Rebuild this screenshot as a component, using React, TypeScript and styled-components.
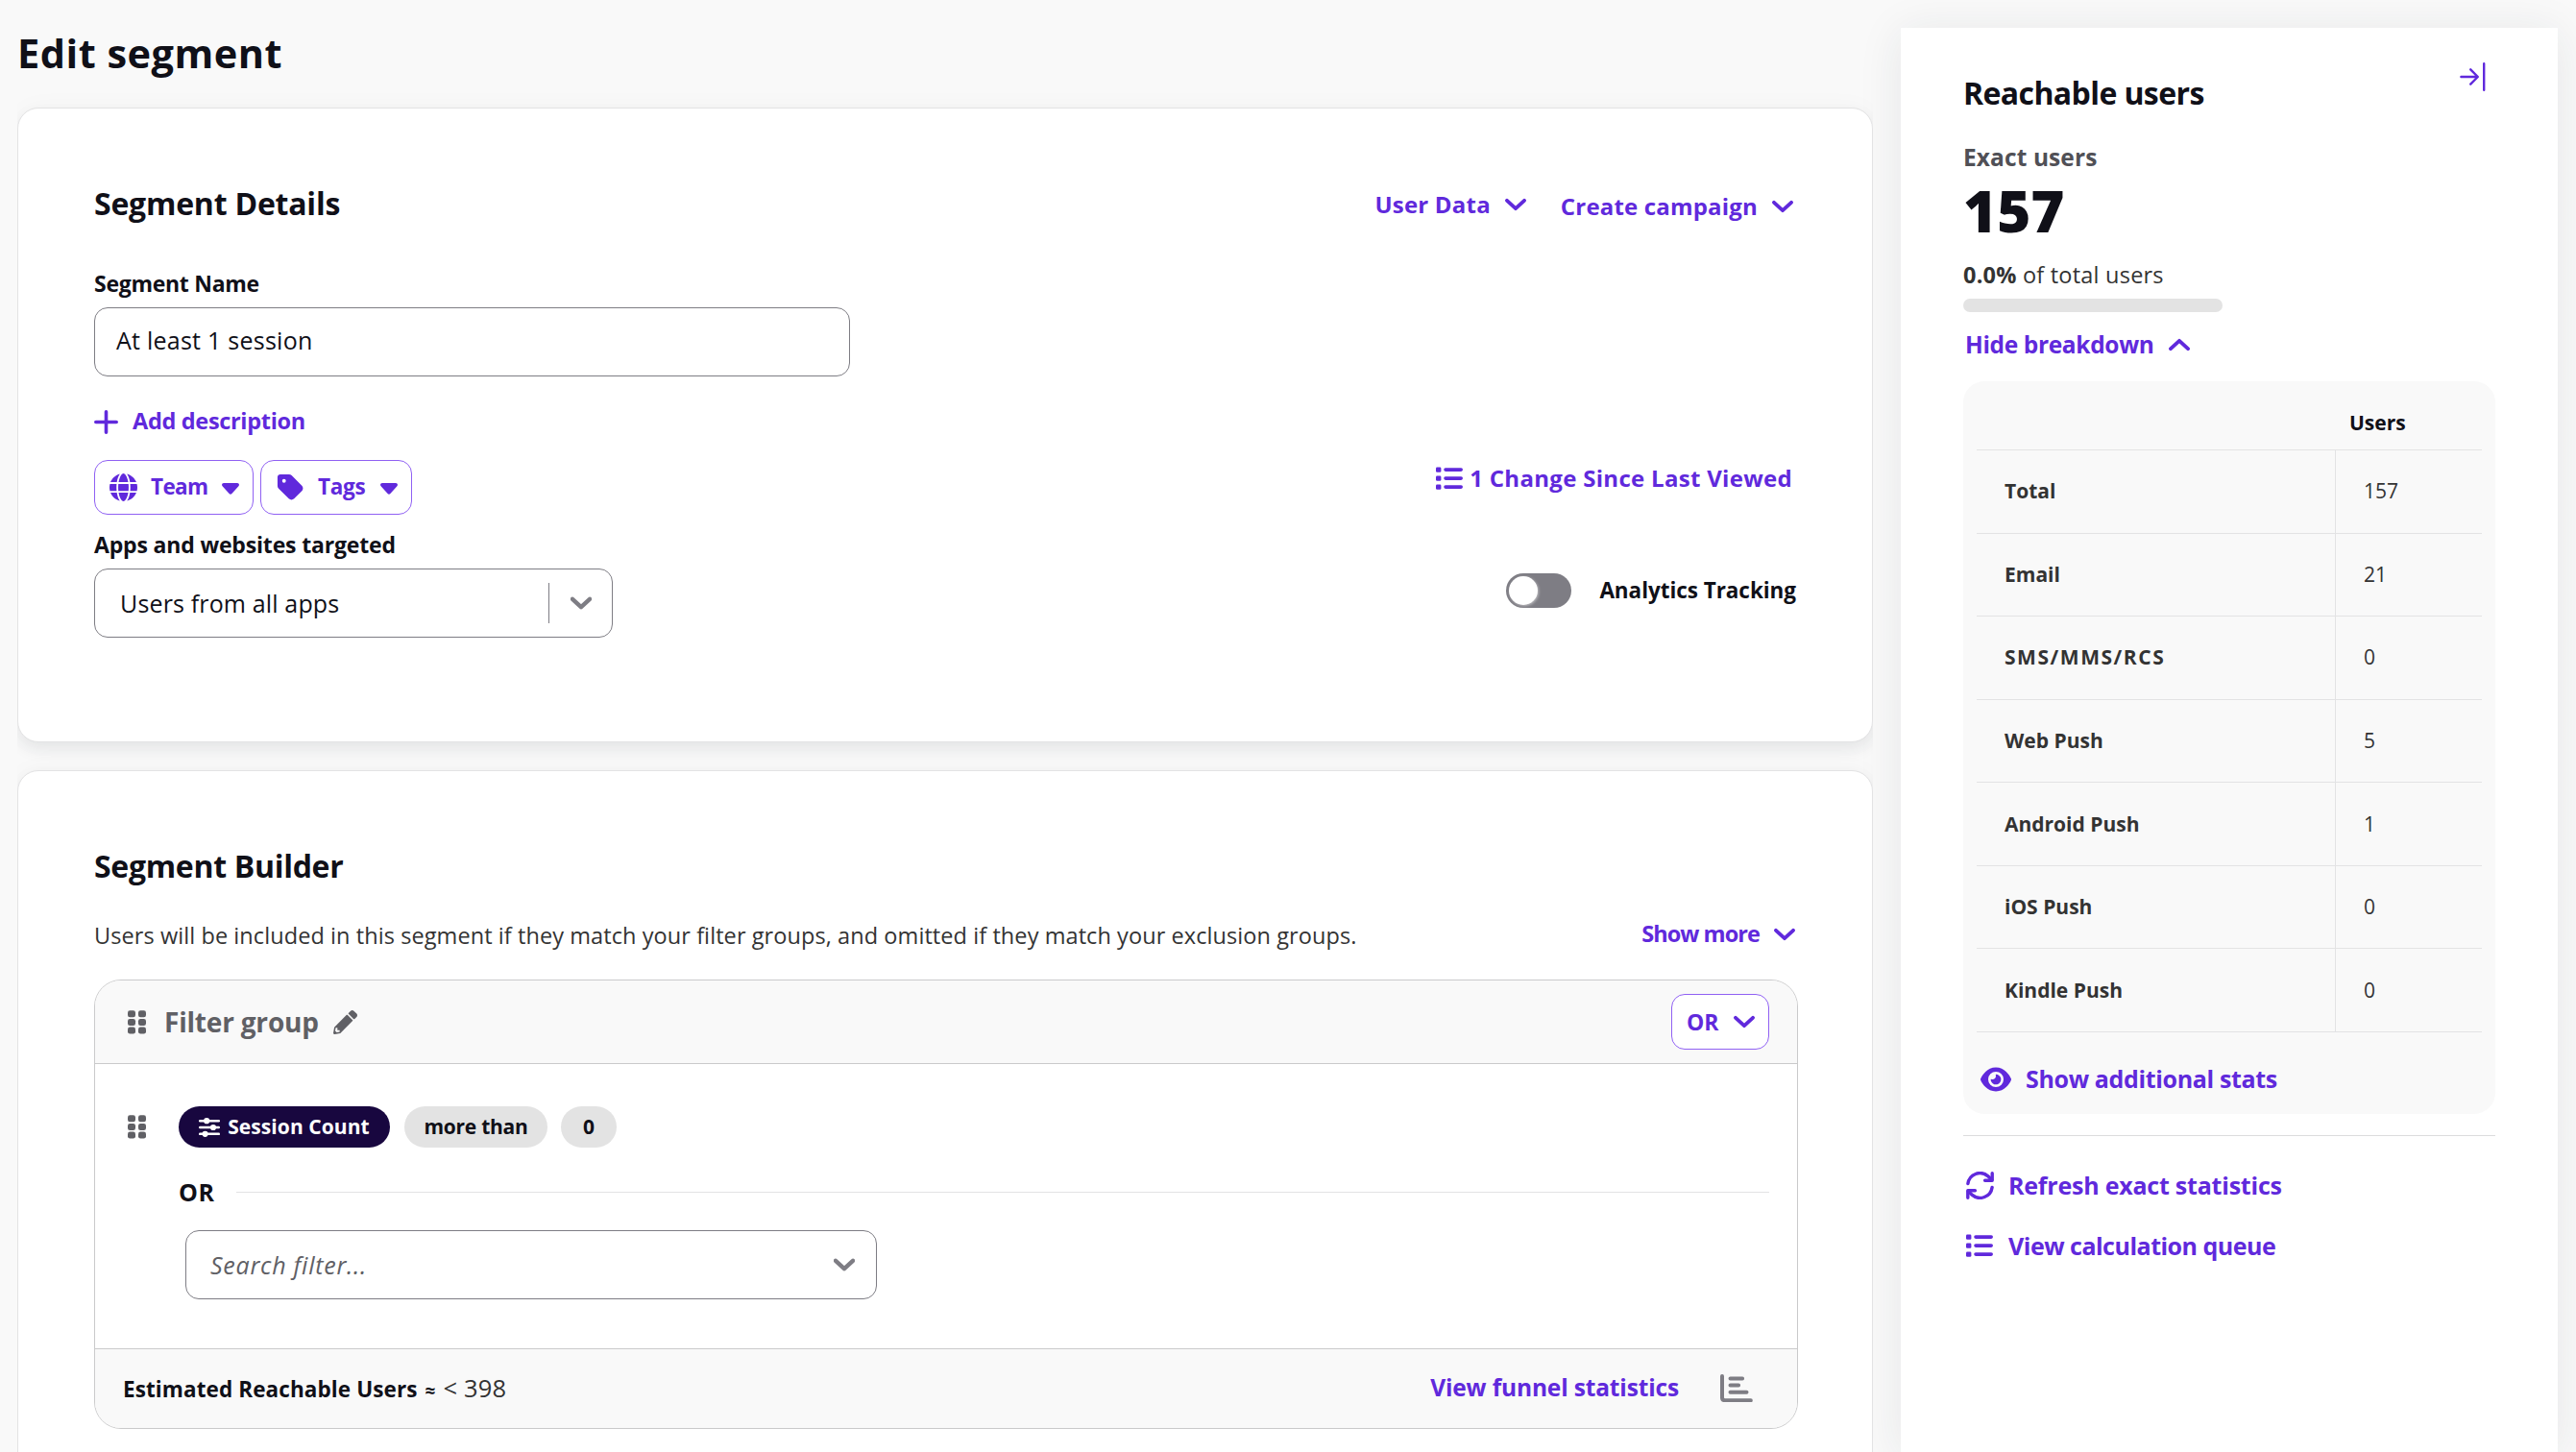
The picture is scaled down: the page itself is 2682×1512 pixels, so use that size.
import React from "react";
import styled, { createGlobalStyle, css } from "styled-components";
import { FaEye, FaGlobe, FaTag } from "react-icons/fa6";

const color = {
  page: "#f9f9f9",
  ink: "#101018",
  body: "#333333",
  muted: "#606065",
  violet: "#6029dc",
  violetLine: "#9061f3",
  field: "#7e7d84",
  line: "#e3e3e4",
  groupLine: "#cacacb",
  navy: "#18073f",
};

const GlobalStyle = createGlobalStyle`
  * { box-sizing: border-box; }
  html, body { margin: 0; padding: 0; background: ${color.page}; }
  body {
    font-family: "Open Sans", "Noto Sans", "Liberation Sans", sans-serif;
    color: ${color.ink};
    overflow: hidden;
  }
  svg { display: block; flex: none; }
`;

const Page = styled.div`
  display: flex;
  width: 2682px;
  height: 1512px;
  overflow: hidden;
  background: ${color.page};
`;

interface TextProps {
  $size: number;
  $track?: number;
  $weight?: number;
  $color?: string;
  $italic?: boolean;
}

const Text = styled.span<TextProps>`
  font-size: ${(p) => p.$size}px;
  line-height: 1;
  font-weight: ${(p) => p.$weight ?? 700};
  letter-spacing: ${(p) => p.$track ?? 0}px;
  color: ${(p) => p.$color ?? "inherit"};
  font-style: ${(p) => (p.$italic ? "italic" : "normal")};
  white-space: nowrap;
`;

/* ---------- icons ---------- */

const Chevron = ({ up = false, tone = "currentColor", bold = 3.8 }: { up?: boolean; tone?: string; bold?: number }) => (
  <svg width="22" height="14" viewBox="0 0 22 14" fill="none" stroke={tone} strokeWidth={bold} strokeLinecap="round" strokeLinejoin="round">
    <path d={up ? "M2 11.2 11 2.8 20 11.2" : "M2 2.8 11 11.2 20 2.8"} />
  </svg>
);

const Caret = () => (
  <svg width="18" height="12" viewBox="0 0 18 12" fill="currentColor">
    <path d="M2 0h14c1.8 0 2.6 2 1.4 3.2l-7 7.9c-.8.9-2 .9-2.8 0l-7-7.9C-.6 2 .2 0 2 0z" />
  </svg>
);

const Plus = () => (
  <svg width="25" height="25" viewBox="0 0 25 25" stroke="currentColor" strokeWidth="3.6" strokeLinecap="round">
    <path d="M12.5 1.8v21.4M1.8 12.5h21.4" />
  </svg>
);

const List = () => (
  <svg width="28" height="24" viewBox="0 0 28 24" fill="currentColor">
    {[0, 9, 18].map((y) => (
      <g key={y}>
        <rect x="0" y={y + 0.4} width="5.4" height="5.4" rx="1.3" />
        <rect x="8.2" y={y + 1.3} width="19.8" height="3.6" rx="1.8" />
      </g>
    ))}
  </svg>
);

const Refresh = () => (
  <svg width="29" height="29" viewBox="0 0 29 29" fill="none" stroke="currentColor" strokeWidth="3.4" strokeLinecap="round" strokeLinejoin="round">
    <path d="M1.9 12.6A12.7 12.7 0 0 1 22.6 4.6L26.6 8.4" />
    <path d="M27.2 1.8v7.4h-7.6" />
    <path d="M27.1 16.4A12.7 12.7 0 0 1 6.4 24.4L2.4 20.6" />
    <path d="M1.8 27.2v-7.4h7.6" />
  </svg>
);

const Pencil = () => (
  <svg width="25" height="25" viewBox="0 0 512 512" fill="currentColor">
    <path d="M497.9 142.1l-46.1 46.1c-4.7 4.7-12.3 4.7-17 0l-111-111c-4.7-4.7-4.7-12.3 0-17l46.1-46.1c18.7-18.7 49.1-18.7 67.9 0l60.1 60.1c18.8 18.7 18.8 49.1 0 67.9zM284.2 99.8L21.6 362.4.4 483.9c-2.9 16.4 11.4 30.6 27.8 27.8l121.5-21.3 262.6-262.6c4.7-4.7 4.7-12.3 0-17l-111-111c-4.8-4.7-12.4-4.7-17.1 0zM88 424h48v36.3l-64.5 11.3-31.1-31.1L51.7 376H88v48z" />
  </svg>
);

const Sliders = () => (
  <svg width="22" height="20" viewBox="0 0 22 20" fill="currentColor">
    <rect x="0" y="1.9" width="22" height="2.6" rx="1.2" />
    <rect x="0" y="8.7" width="22" height="2.6" rx="1.2" />
    <rect x="0" y="15.5" width="22" height="2.6" rx="1.2" />
    <circle cx="8.2" cy="3.2" r="3.1" />
    <circle cx="15" cy="10" r="3.1" />
    <circle cx="6.6" cy="16.8" r="3.1" />
  </svg>
);

const Grip = () => (
  <svg width="19" height="25" viewBox="0 0 19 25" fill={color.muted}>
    {[0.2, 9, 17.6].map((y) =>
      [0, 11].map((x) => <rect key={`${x}-${y}`} x={x} y={y} width="8" height="7" rx="2.3" />)
    )}
  </svg>
);

const BarChart = () => (
  <svg width="34" height="29" viewBox="0 0 34 29" fill="none" stroke={color.field} strokeWidth="4" strokeLinecap="round">
    <path d="M2 2v22.2c0 1.8 1.2 3 3 3h26.8" strokeLinejoin="round" />
    <path d="M10.5 4.4h12.6M10.5 11.5h8.6M10.5 18.8h17" />
  </svg>
);

const Collapse = () => (
  <svg width="27" height="30" viewBox="0 0 27 30" fill="none" stroke="currentColor" strokeWidth="2.4" strokeLinecap="round" strokeLinejoin="round">
    <path d="M1.4 15h17M11.2 7.3 18.8 15l-7.6 7.7M25.2 1.2v27.6" />
  </svg>
);

/* ---------- left column ---------- */

const Main = styled.main`
  width: 1979px;
  flex: none;
  padding: 0 29px 0 18px;
`;

const PageTitle = styled.h1`
  margin: 0;
  height: 112px;
  padding-top: 35px;
  font-size: 41.5px;
  line-height: 41px;
  font-weight: 700;
  letter-spacing: 0.5px;
`;

const Card = styled.section<{ $height: number }>`
  height: ${(p) => p.$height}px;
  padding: 74px 77px 0 79px;
  background: #fff;
  border: 1px solid ${color.line};
  border-radius: 22px;
  box-shadow: 0 8px 16px rgba(33, 40, 60, 0.075), 0 0 26px rgba(33, 40, 60, 0.03);
  clip-path: inset(-40px 0);
  & + & { margin-top: 29px; }
`;

const CardHead = styled.header`
  display: flex;
  align-items: center;
  justify-content: space-between;
  height: 50px;
`;

const CardTitle = styled.h2<{ $track?: number }>`
  margin: 0;
  font-size: 32px;
  line-height: 32px;
  font-weight: 700;
  letter-spacing: ${(p) => p.$track ?? -0.22}px;
`;

const Actions = styled.div`
  display: flex;
  align-items: center;
  gap: 36px;
  padding: 2px 5px 0 0;
`;

const LinkButton = styled.button<{ $gap?: number; $drop?: number }>`
  display: flex;
  align-items: center;
  gap: ${(p) => p.$gap ?? 15}px;
  height: 30px;
  padding: 0;
  margin: ${(p) => p.$drop ?? 0}px 0 0;
  border: 0;
  background: none;
  font: inherit;
  color: ${color.violet};
`;

const DetailsBody = styled.div`
  display: flex;
  justify-content: space-between;
`;

const Fields = styled.div`
  display: flex;
  flex-direction: column;
  align-items: flex-start;
  padding-top: 43px;
`;

const FieldLabel = styled.label`
  display: flex;
  align-items: center;
  height: 30px;
  margin-bottom: 10px;
`;

const Field = styled.div<{ $width: number; $pad: number; $end?: number; $lift?: number }>`
  display: flex;
  align-items: center;
  width: ${(p) => p.$width}px;
  height: 72px;
  padding: 0 ${(p) => p.$end ?? 21}px ${(p) => p.$lift ?? 0}px ${(p) => p.$pad}px;
  background: #fff;
  border: 1px solid ${color.field};
  border-radius: 14px;
`;

const FieldValue = styled.div`
  flex: 1;
  display: flex;
`;

const FieldSplit = styled.div`
  width: 1px;
  height: 42px;
  margin-right: 22px;
  background: ${color.field};
`;

const AddRow = styled.div`
  margin: 32px 0 25px;
`;

const ChipRow = styled.div`
  display: flex;
  gap: 7px;
  margin-bottom: 16px;
`;

const outlined = css`
  display: flex;
  align-items: center;
  background: #fff;
  border: 1px solid ${color.violetLine};
  border-radius: 14px;
  color: ${color.violet};
  font: inherit;
`;

const ChipButton = styled.button<{ $width: number; $gap: number }>`
  ${outlined}
  width: ${(p) => p.$width}px;
  height: 57px;
  padding: 0 14px 0 15px;
  & > svg:first-child { margin-right: ${(p) => p.$gap}px; }
  & > svg:last-child { margin-left: auto; margin-top: 2px; }
`;

const DetailsSide = styled.div`
  display: flex;
  flex-direction: column;
  align-items: flex-end;
  padding-top: 246px;
`;

const ChangeRow = styled.div`
  padding-right: 6px;
  margin-bottom: 84px;
`;

const ToggleRow = styled.div`
  display: flex;
  align-items: center;
  gap: 29px;
  padding-right: 2px;
`;

const Track = styled.div`
  width: 68px;
  height: 36px;
  padding: 3px;
  border-radius: 18px;
  background: ${color.field};
`;

const Knob = styled.div`
  width: 30px;
  height: 30px;
  border-radius: 50%;
  background: #fff;
  box-shadow: 1px 1px 3px rgba(255, 255, 255, 0.5);
`;

const Intro = styled.div`
  display: flex;
  align-items: center;
  justify-content: space-between;
  height: 28px;
  margin: 34px 0 31px;
  padding-right: 3px;
`;

const Group = styled.div`
  height: 468px;
  border: 1px solid ${color.groupLine};
  border-radius: 28px;
  overflow: hidden;
  background: #fff;
`;

const GroupHead = styled.div`
  display: flex;
  align-items: center;
  height: 87px;
  padding: 0 29px 0 34px;
  background: ${color.page};
  border-bottom: 1px solid ${color.groupLine};
`;

const GroupName = styled.div`
  flex: 1;
  display: flex;
  align-items: center;
  gap: 15px;
  margin-left: 19px;
  color: ${color.muted};
`;

const OrButton = styled.button`
  ${outlined}
  justify-content: space-between;
  width: 102px;
  height: 58px;
  padding: 0 14px 0 15px;
`;

const GroupBody = styled.div`
  height: 296px;
  padding: 44px 29px 0 34px;
`;

const FilterRow = styled.div`
  display: flex;
  align-items: center;
  height: 43px;
`;

const Pill = styled.div<{ $width: number; $dark?: boolean; $gap: number }>`
  display: flex;
  align-items: center;
  justify-content: center;
  gap: 8px;
  width: ${(p) => p.$width}px;
  height: 43px;
  margin-left: ${(p) => p.$gap}px;
  border-radius: 22px;
  color: ${(p) => (p.$dark ? "#fff" : color.ink)};
  background: ${(p) => (p.$dark ? color.navy : "#e3e3e3")};
`;

const OrDivider = styled.div`
  display: flex;
  align-items: center;
  height: 30px;
  margin: 31px 0 25px 53px;
`;

const Rule = styled.div`
  flex: 1;
  height: 1px;
  margin-left: 22px;
  background: ${color.line};
`;

const SearchWrap = styled.div`
  margin-left: 60px;
`;

const GroupFoot = styled.div`
  display: flex;
  align-items: center;
  height: 83px;
  padding: 0 46px 1px 29px;
  background: ${color.page};
  border-top: 1px solid ${color.groupLine};
`;

const Estimate = styled.div`
  flex: 1;
  display: flex;
  align-items: baseline;
  gap: 8px;
`;

/* ---------- reachable users panel ---------- */

const Panel = styled.aside`
  width: 684px;
  height: 1483px;
  margin-top: 29px;
  padding: 36px 65px 0;
  flex: none;
  background: #fff;
  box-shadow: 0 4px 44px rgba(33, 40, 60, 0.09);
`;

const PanelHead = styled.header`
  display: flex;
  justify-content: space-between;
  align-items: flex-start;
  height: 47px;
  padding-right: 10px;
  color: ${color.violet};
`;

const PanelTitle = styled(CardTitle)`
  margin-top: 16px;
  color: ${color.ink};
`;

const Line = styled.div<{ $top: number; $height: number }>`
  display: flex;
  align-items: center;
  height: ${(p) => p.$height}px;
  margin-top: ${(p) => p.$top}px;
`;

const Meter = styled.div`
  width: 270px;
  height: 14px;
  margin: 12px 0 19px;
  border-radius: 7px;
  background: #e3e3e3;
`;

const HideLink = styled(LinkButton)`
  margin-left: 2px;
`;

const Breakdown = styled.div`
  height: 763px;
  margin-top: 23px;
  padding: 0 14px;
  border-radius: 22px;
  background: ${color.page};
`;

const TableHead = styled.div`
  display: flex;
  align-items: center;
  height: 72px;
  padding: 15px 0 0 388px;
  border-bottom: 1px solid ${color.line};
`;

const TableRow = styled.div`
  display: grid;
  grid-template-columns: 373px 1fr;
  height: 86.57px;
  border-bottom: 1px solid ${color.line};
  color: ${color.body};
`;

const Cell = styled.div`
  display: flex;
  align-items: center;
  padding-left: 29px;
  & + & { border-left: 1px solid ${color.line}; }
`;

const StatsLink = styled.div`
  margin: 34px 0 0 4px;
`;

const PanelLinks = styled.nav`
  display: flex;
  flex-direction: column;
  gap: 33px;
  margin-top: 22px;
  padding: 36px 0 0 3px;
  border-top: 1px solid #dcdcdd;
`;

const stats: { name: string; value: string; track?: number }[] = [
  { name: "Total", value: "157" },
  { name: "Email", value: "21" },
  { name: "SMS/MMS/RCS", value: "0", track: 1.55 },
  { name: "Web Push", value: "5" },
  { name: "Android Push", value: "1" },
  { name: "iOS Push", value: "0" },
  { name: "Kindle Push", value: "0" },
];

const SegmentDetails = () => (
  <Card $height={661}>
    <CardHead>
      <CardTitle>Segment Details</CardTitle>
      <Actions>
        <LinkButton>
          <Text $size={24} $track={0.2}>User Data</Text>
          <Chevron />
        </LinkButton>
        <LinkButton $drop={4}>
          <Text $size={24} $track={0.18}>Create campaign</Text>
          <Chevron />
        </LinkButton>
      </Actions>
    </CardHead>
    <DetailsBody>
      <Fields>
        <FieldLabel><Text $size={23} $track={-0.28}>Segment Name</Text></FieldLabel>
        <Field $width={787} $pad={22} $lift={3}>
          <Text $size={25} $weight={400} $track={0.25}>At least 1 session</Text>
        </Field>
        <AddRow>
          <LinkButton>
            <Plus />
            <Text $size={23.5} $track={-0.32}>Add description</Text>
          </LinkButton>
        </AddRow>
        <ChipRow>
          <ChipButton $width={166} $gap={14}>
            <FaGlobe size={29} />
            <Text $size={22.5} $track={-0.6}>Team</Text>
            <Caret />
          </ChipButton>
          <ChipButton $width={158} $gap={13}>
            <FaTag size={31} />
            <Text $size={22.5} $track={-0.3}>Tags</Text>
            <Caret />
          </ChipButton>
        </ChipRow>
        <FieldLabel><Text $size={23} $track={-0.17}>Apps and websites targeted</Text></FieldLabel>
        <Field $width={540} $pad={26}>
          <FieldValue><Text $size={25} $weight={400} $track={0.15}>Users from all apps</Text></FieldValue>
          <FieldSplit />
          <Chevron tone={color.field} bold={4.4} />
        </Field>
      </Fields>
      <DetailsSide>
        <ChangeRow>
          <LinkButton $gap={7}>
            <List />
            <Text $size={24} $track={0.3}>1 Change Since Last Viewed</Text>
          </LinkButton>
        </ChangeRow>
        <ToggleRow>
          <Track><Knob /></Track>
          <Text $size={22.5} $track={-0.05}>Analytics Tracking</Text>
        </ToggleRow>
      </DetailsSide>
    </DetailsBody>
  </Card>
);

const SegmentBuilder = () => (
  <Card $height={760}>
    <CardHead>
      <CardTitle $track={-0.3}>Segment Builder</CardTitle>
    </CardHead>
    <Intro>
      <Text $size={23.5} $weight={400} $color={color.body} $track={0.08}>
        Users will be included in this segment if they match your filter groups, and omitted if they match your exclusion groups.
      </Text>
      <LinkButton $drop={-5}>
        <Text $size={23.5} $track={-0.95}>Show more</Text>
        <Chevron />
      </LinkButton>
    </Intro>
    <Group>
      <GroupHead>
        <Grip />
        <GroupName>
          <Text $size={28} $track={-0.2}>Filter group</Text>
          <Pencil />
        </GroupName>
        <OrButton>
          <Text $size={23}>OR</Text>
          <Chevron />
        </OrButton>
      </GroupHead>
      <GroupBody>
        <FilterRow>
          <Grip />
          <Pill $width={220} $gap={34} $dark>
            <Sliders />
            <Text $size={21} $track={0.08}>Session Count</Text>
          </Pill>
          <Pill $width={149} $gap={15}><Text $size={21} $track={-0.25}>more than</Text></Pill>
          <Pill $width={58} $gap={14}><Text $size={21}>0</Text></Pill>
        </FilterRow>
        <OrDivider>
          <Text $size={25} $track={0.6}>OR</Text>
          <Rule />
        </OrDivider>
        <SearchWrap>
          <Field $width={720} $pad={25} $end={22}>
            <FieldValue>
              <Text $size={25} $weight={400} $color={color.muted} $track={0.75} $italic>Search filter...</Text>
            </FieldValue>
            <Chevron tone={color.field} bold={4.4} />
          </Field>
        </SearchWrap>
      </GroupBody>
      <GroupFoot>
        <Estimate>
          <Text $size={22.5} $track={0.1}>Estimated Reachable Users</Text>
          <Text $size={19}>≈</Text>
          <Text $size={25.5} $weight={400} $color={color.body} $track={0.2}>&lt; 398</Text>
        </Estimate>
        <LinkButton $gap={43}>
          <Text $size={24.5} $track={-0.15}>View funnel statistics</Text>
          <BarChart />
        </LinkButton>
      </GroupFoot>
    </Group>
  </Card>
);

const ReachableUsers = () => (
  <Panel>
    <PanelHead>
      <PanelTitle $track={-0.6}>Reachable users</PanelTitle>
      <Collapse />
    </PanelHead>
    <Line $top={40} $height={25}><Text $size={24.5} $track={0.1} $color="#505056">Exact users</Text></Line>
    <Line $top={12} $height={60}><Text $size={60} $weight={800}>157</Text></Line>
    <Line $top={26} $height={24}>
      <Text $size={23.5} $weight={400} $color={color.body} $track={0.22}><b>0.0%</b> of total users</Text>
    </Line>
    <Meter />
    <HideLink>
      <Text $size={24.5} $track={-0.35}>Hide breakdown</Text>
      <Chevron up />
    </HideLink>
    <Breakdown>
      <TableHead><Text $size={21}>Users</Text></TableHead>
      {stats.map(({ name, value, track }) => (
        <TableRow key={name}>
          <Cell><Text $size={21} $track={track}>{name}</Text></Cell>
          <Cell><Text $size={21} $weight={400}>{value}</Text></Cell>
        </TableRow>
      ))}
      <StatsLink>
        <LinkButton $gap={15}>
          <FaEye size={32} />
          <Text $size={25} $track={-0.35}>Show additional stats</Text>
        </LinkButton>
      </StatsLink>
    </Breakdown>
    <PanelLinks>
      <LinkButton $gap={15}>
        <Refresh />
        <Text $size={25} $track={-0.22}>Refresh exact statistics</Text>
      </LinkButton>
      <LinkButton $gap={16}>
        <List />
        <Text $size={25} $track={-0.5}>View calculation queue</Text>
      </LinkButton>
    </PanelLinks>
  </Panel>
);

export default function App() {
  return (
    <>
      <GlobalStyle />
      <Page>
        <Main>
          <PageTitle>Edit segment</PageTitle>
          <SegmentDetails />
          <SegmentBuilder />
        </Main>
        <ReachableUsers />
      </Page>
    </>
  );
}
